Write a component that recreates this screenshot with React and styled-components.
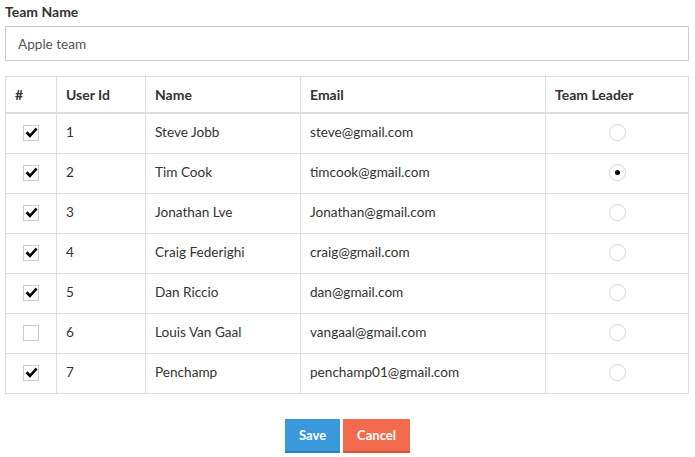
import React from 'react';
import styled, { createGlobalStyle } from 'styled-components';

const GlobalStyle = createGlobalStyle`
  body {
    margin: 0;
    background: #fff;
    font-family: Lato, "Open Sans", "Liberation Sans", sans-serif;
    color: #333;
  }
`;

const Page = styled.div`
  width: 695px;
  padding: 3px 6px 0 5px;
  box-sizing: border-box;
`;

const Label = styled.label`
  display: block;
  font-size: 14px;
  font-weight: 700;
  line-height: 18px;
  margin-bottom: 5px;
  color: #333;
`;

const TextInput = styled.input`
  display: block;
  width: 100%;
  height: 35px;
  box-sizing: border-box;
  border: 1px solid #ccc;
  padding: 0 12px;
  font-family: inherit;
  font-size: 13.6px;
  color: #555;
  outline: none;
  margin-bottom: 15px;
`;

const Table = styled.table`
  width: 100%;
  border-collapse: collapse;
  table-layout: fixed;
  font-size: 13.6px;
`;

const Th = styled.th`
  text-align: left;
  font-size: 14px;
  font-weight: 700;
  height: 34px;
  padding: 0 9px 1px;
  border: 1px solid #ddd;
  border-bottom: 2px solid #ddd;
  color: #333;
`;

const Td = styled.td`
  height: 36px;
  padding: 0 9px 3px;
  border: 1px solid #ddd;
  color: #333;
  text-align: ${p => (p.center ? 'center' : 'left')};
  vertical-align: middle;
`;

const Box = styled.span`
  display: inline-flex;
  align-items: center;
  justify-content: center;
  width: 16px;
  height: 16px;
  box-sizing: border-box;
  border: 1px solid #ccc;
  background: #fff;
  vertical-align: middle;
  margin-left: 8px;
`;

const Radio = styled.span`
  display: inline-flex;
  align-items: center;
  justify-content: center;
  width: 17px;
  height: 17px;
  box-sizing: border-box;
  border: 1px solid #d6d6d6;
  border-radius: 50%;
  background: #fff;
  vertical-align: middle;
  &::after {
    content: '';
    display: ${p => (p.checked ? 'block' : 'none')};
    width: 5px;
    height: 5px;
    border-radius: 50%;
    background: #000;
  }
`;

const Actions = styled.div`
  display: flex;
  justify-content: center;
  gap: 3px;
  margin-top: 25px;
  padding-left: 1px;
`;

const Button = styled.button`
  height: 34px;
  padding: 0 14px;
  border: none;
  border-bottom: 2px solid ${p => (p.danger ? '#d9533b' : '#2a83c1')};
  background: ${p => (p.danger ? '#f26b4f' : '#3a98db')};
  color: #fff;
  font-family: inherit;
  font-size: 13px;
  font-weight: 700;
  cursor: pointer;
`;

const Check = () => (
  <svg width="13" height="12" viewBox="0 0 13 12">
    <path d="M0.5 6.2 L2.6 4.3 L5 7 L10.8 0.6 L12.5 2.4 L5 10.8 Z" fill="#000" />
  </svg>
);

const users = [
  { id: 1, name: 'Steve Jobb', email: 'steve@gmail.com', on: true },
  { id: 2, name: 'Tim Cook', email: 'timcook@gmail.com', on: true, leader: true },
  { id: 3, name: 'Jonathan Lve', email: 'Jonathan@gmail.com', on: true },
  { id: 4, name: 'Craig Federighi', email: 'craig@gmail.com', on: true },
  { id: 5, name: 'Dan Riccio', email: 'dan@gmail.com', on: true },
  { id: 6, name: 'Louis Van Gaal', email: 'vangaal@gmail.com', on: false },
  { id: 7, name: 'Penchamp', email: 'penchamp01@gmail.com', on: true },
];

export default function App() {
  return (
    <Page>
      <GlobalStyle />
      <Label>Team Name</Label>
      <TextInput defaultValue="Apple team" />
      <Table>
        <colgroup>
          <col style={{ width: 51 }} />
          <col style={{ width: 89 }} />
          <col style={{ width: 155 }} />
          <col style={{ width: 245 }} />
          <col />
        </colgroup>
        <thead>
          <tr>
            <Th>#</Th>
            <Th>User Id</Th>
            <Th>Name</Th>
            <Th>Email</Th>
            <Th>Team Leader</Th>
          </tr>
        </thead>
        <tbody>
          {users.map(u => (
            <tr key={u.id}>
              <Td>
                <Box>{u.on && <Check />}</Box>
              </Td>
              <Td>{u.id}</Td>
              <Td>{u.name}</Td>
              <Td>{u.email}</Td>
              <Td center>
                <Radio checked={u.leader} />
              </Td>
            </tr>
          ))}
        </tbody>
      </Table>
      <Actions>
        <Button>Save</Button>
        <Button danger>Cancel</Button>
      </Actions>
    </Page>
  );
}
